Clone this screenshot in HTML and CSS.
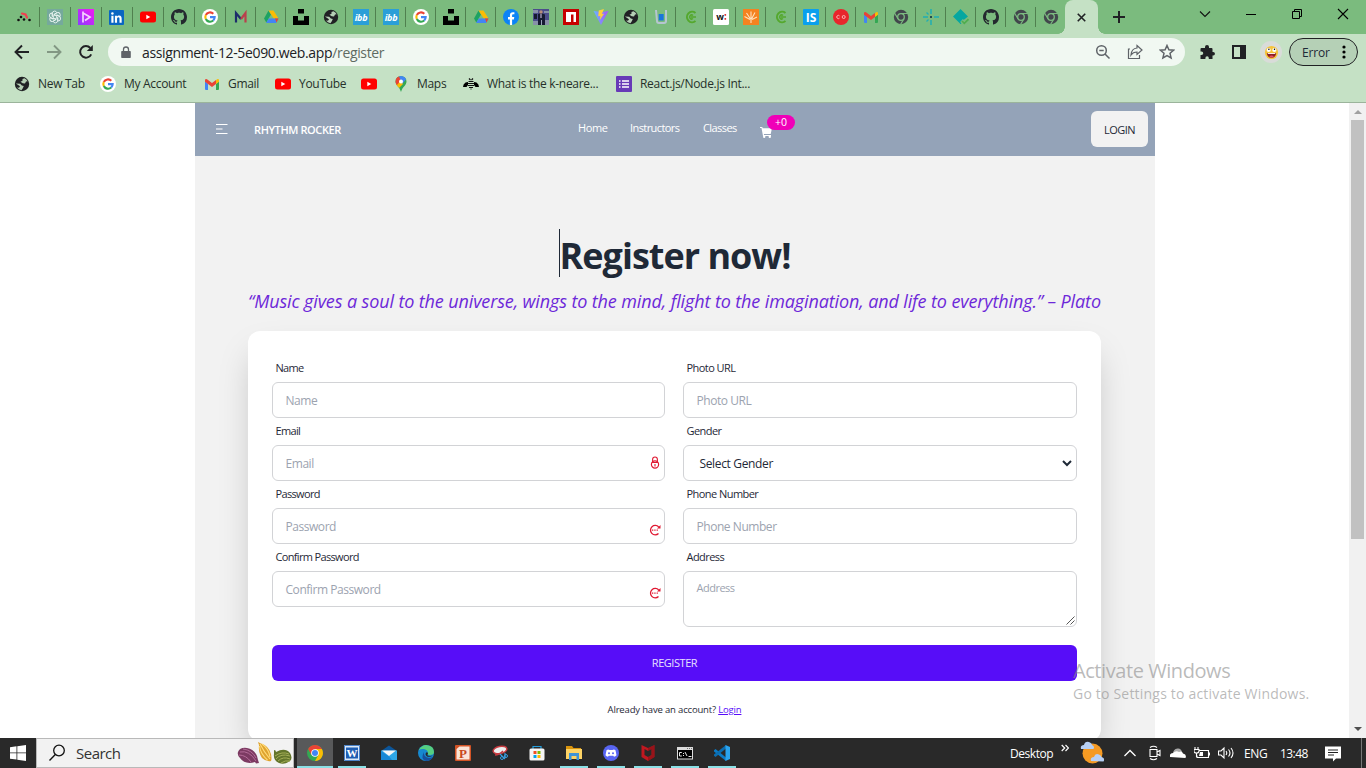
FILE: index.html
```html
<!DOCTYPE html>
<html lang="en">
<head>
<meta charset="utf-8">
<title>Rhythm Rocker | Register</title>
<link rel="stylesheet" href="styles.css">
</head>
<body>
<svg class="sprite" aria-hidden="true">
  <defs>
    <symbol id="dots" viewBox="0 0 16 16"><g fill="#111"><circle cx="2.500" cy="11" r="1.300"/><circle cx="5" cy="8" r="1.300"/><circle cx="8" cy="10.500" r="1.300"/><circle cx="13.500" cy="11" r="1.300"/></g><path d="M6 4.500l3.500 1 1.500 3" fill="none" stroke="#f04050" stroke-width="2.200" stroke-linecap="round"/></symbol>
    <symbol id="gpt" viewBox="0 0 16 16"><path fill="#75a99c" d="M0 0h16v16H0z"/><g fill="none" stroke="#e8f3f0" stroke-width=".9"><path id="petal" d="M8 6L5.300 7.500V4.300q.2-2 2.200-2.200 1.800 0 2.500 1.500L7.300 5.200"/><use href="#petal" transform="rotate(60 8 8)"/><use href="#petal" transform="rotate(120 8 8)"/><use href="#petal" transform="rotate(180 8 8)"/><use href="#petal" transform="rotate(240 8 8)"/><use href="#petal" transform="rotate(300 8 8)"/></g></symbol>
    <symbol id="purple" viewBox="0 0 16 16"><path fill="url(#pg)" d="M0 0h16v16H0z"/><path d="M5 2.500v11M5 4l7 4-5 3.500" fill="none" stroke="#f5d5ff" stroke-width="1.700"/></symbol>
    <linearGradient id="pg" x1="1" x2="0" y2="1"><stop stop-color="#f41bf1"/><stop offset="1" stop-color="#8a3cff"/></linearGradient>
    <symbol id="linkedin" viewBox="0 0 16 16"><rect width="16" height="16" rx="1" fill="#0a66c2"/><path fill="#fff" d="M2.500 6h2.300v7.500H2.500zM6.300 6h2.200v1c.4-.7 1.200-1.200 2.300-1.200 2.200 0 2.700 1.400 2.700 3.400v4.300h-2.300V9.700c0-1-.1-1.900-1.200-1.900s-1.400.9-1.400 1.900v3.800H6.300z"/><circle cx="3.650" cy="3.650" r="1.350" fill="#fff"/></symbol>
    <symbol id="youtube" viewBox="0 0 16 16"><rect y="2.500" width="16" height="11" rx="2.500" fill="#f00"/><path fill="#fff" d="M6.300 5.700v4.600l4-2.300z"/></symbol>
    <symbol id="github" viewBox="0 0 16 16"><path fill="#24292f" d="M8 0C3.580 0 0 3.580 0 8c0 3.540 2.290 6.530 5.470 7.590.4.070.55-.17.55-.38 0-.19-.01-.82-.01-1.490-2.010.37-2.530-.49-2.690-.94-.09-.23-.48-.94-.82-1.130-.28-.15-.68-.52-.01-.53.63-.01 1.080.58 1.230.82.72 1.210 1.870.87 2.330.66.07-.52.28-.87.51-1.070-1.780-.2-3.640-.89-3.640-3.950 0-.87.31-1.590.82-2.150-.08-.2-.36-1.020.08-2.120 0 0 .67-.21 2.200.82.64-.18 1.320-.27 2-.27s1.360.09 2 .27c1.530-1.040 2.200-.82 2.200-.82.44 1.100.16 1.920.08 2.120.51.56.82 1.270.82 2.150 0 3.070-1.870 3.750-3.650 3.950.29.25.54.73.54 1.480 0 1.070-.01 1.930-.01 2.200 0 .21.15.46.55.38A8.010 8.010 0 0 0 16 8c0-4.420-3.580-8-8-8z"/></symbol>
    <symbol id="google" viewBox="0 0 16 16"><circle cx="8" cy="8" r="8" fill="#fff"/><g fill="none" stroke-width="2.100"><path stroke="#ea4335" d="M11.300 4.700A4.700 4.700 0 0 0 3.800 6"/><path stroke="#fbbc05" d="M3.800 6a4.700 4.700 0 0 0 0 4"/><path stroke="#34a853" d="M3.800 10a4.700 4.700 0 0 0 7.400 1.500"/><path stroke="#4285f4" d="M11.200 11.500A4.700 4.700 0 0 0 12.700 8.100H8"/></g></symbol>
    <symbol id="mletter" viewBox="0 0 16 16"><path d="M3 13.500V4l5 6" fill="none" stroke="#1d2d6b" stroke-width="2.200"/><path d="M8 10l4.500-6v9.500" fill="none" stroke="#b9404c" stroke-width="2.200"/></symbol>
    <symbol id="drive" viewBox="0 0 16 16"><path fill="#1ea362" d="M5.500 1.500L1 9.500l2.300 4L8 5.500z"/><path fill="#fbbc04" d="M5.500 1.500h5l5 8h-4.700z"/><path fill="#4285f4" d="M5.700 9.500h9.800l-2.300 4.500H3.100z"/><path fill="#ea4335" d="M12 9.500h3.500l-2 4z"/></symbol>
    <symbol id="unsplash" viewBox="0 0 16 16"><path d="M5 0h6v4.500H5zM0 7h5v4.500h6V7h5v9H0z"/></symbol>
    <symbol id="globe" viewBox="0 0 16 16"><circle cx="8" cy="8" r="7.200" fill="#202124"/><path fill="#b5cfb5" d="M8.500 3l2-.8q2 1 3.200 3l-1.700.3-1 2-2.300-.3-2.200-1.500 2-1zM1.900 7.500l4.300.3 1.600 1.700 2 .5-1 2.200-1.300 2q-3-.3-4.500-2.700l2 .3 1-1.500z"/></symbol>
    <symbol id="ibb" viewBox="0 0 16 16"><path fill="#2a9fd8" d="M0 0h16v16H0z"/><text x="8" y="12" class="ico-text ibb-text">ibb</text></symbol>
    <symbol id="facebook" viewBox="0 0 16 16"><circle cx="8" cy="8" r="8" fill="#0c83f5"/><path fill="#fff" d="M6.900 16v-5.600H5V8h1.900V6.400c0-2.100 1.100-3.200 3-3.200l1.500.1v2h-1c-1 0-1.300.5-1.300 1.200V8h2.200l-.4 2.400H9.100V16z"/></symbol>
    <symbol id="photo" viewBox="0 0 16 16"><path fill="#4b4d8b" d="M0 0h16v16H0z"/><path fill="#8790a8" d="M0 1h5v3H0zM11 2h5v2h-5zM0 12h5v4H0zM12 11h4v5h-4z"/><path fill="#161a32" d="M5 5l3-1 4 1.500V16H5zM1 5h3v5H1z"/><path fill="#99a4ba" d="M8 11h1v5H8z"/><circle cx="8" cy="3" r="1.700" fill="#b98c7c"/><path stroke="#dce" d="M8 5v4"/></symbol>
    <symbol id="npm" viewBox="0 0 16 16"><path fill="#c70000" d="M0 0h16v16H0z"/><path fill="#fff" d="M3 3h10v10h-2.500V5.500H8V13H3z"/></symbol>
    <symbol id="vite" viewBox="0 0 16 16"><path fill="url(#vg)" d="M.5 2L8 16l7.500-14L9 3z"/><path fill="#ffcf3a" d="M11 0L5.800 1.400 5.200 7.300l2.200-.4-.6 4 4.300-6.200-2.200.3z"/></symbol>
    <linearGradient id="vg" x2="1"><stop stop-color="#67b7ff"/><stop offset="1" stop-color="#a855f7"/></linearGradient>
    <symbol id="bluecup" viewBox="0 0 16 16"><path fill="none" stroke="#b6c5d0" stroke-width="2" d="M3 1l1 11q0 2 2 2h5q2 0 2-2V1"/><path fill="#1976dc" d="M5.700 5h5v6.500h-5z"/></symbol>
    <symbol id="cgreen" viewBox="0 0 16 16"><path fill="none" stroke="#54a82d" stroke-width="2" d="M12.500 4A5.200 5.200 0 1 0 12.500 12"/><path fill="none" stroke="#54a82d" stroke-width="1.500" d="M10 6.500a2 2 0 1 0 0 3M8 8h5"/></symbol>
    <symbol id="wcolon" viewBox="0 0 16 16"><rect width="16" height="16" rx="1.500" fill="#fff"/><text x="7" y="11" class="ico-text w-text">w</text><path fill="#d33" d="M11.500 5h1.600v1.800h-1.600zM11.500 9h1.600v1.800h-1.600z"/></symbol>
    <symbol id="orange" viewBox="0 0 16 16"><path fill="#f58220" d="M0 0h16v16H0z"/><path d="M8 10V2.500M7.500 10L3.500 4M8.500 10L12 3.500M7 10.500L1.500 7.500M9 10.500l5-2.500M8 9v5" stroke="#ffe1bd" stroke-width="1.100" fill="none"/></symbol>
    <symbol id="is" viewBox="0 0 16 16"><rect width="16" height="16" rx="1" fill="#0aa0ee"/><text x="8" y="12.500" class="ico-text is-text">IS</text></symbol>
    <symbol id="co" viewBox="0 0 16 16"><circle cx="8" cy="8" r="8" fill="#e8262c"/><g fill="none" stroke="#ffc1c1" stroke-width=".9"><path d="M6.500 6.900a1.600 1.600 0 1 0 0 2.200"/><circle cx="10.700" cy="8" r="1.500"/></g></symbol>
    <symbol id="gmail" viewBox="0 0 16 16"><path fill="#4285f4" d="M1 5.500l3 2.200V14H2q-1 0-1-1z"/><path fill="#34a853" d="M12 7.700l3-2.200V13q0 1-1 1h-2z"/><path fill="#fbbc04" d="M12 4.300l1-1q2-.8 2 1.200v1.200l-3 2.200z"/><path fill="#ea4335" d="M1 4.500q0-2 2-1.200l5 3.800 4-3v3.800L8 11 1 5.700z"/></symbol>
    <symbol id="chromegray" viewBox="0 0 16 16"><circle cx="8" cy="8" r="7.200" fill="#42474c"/><circle cx="8" cy="8" r="3.300" fill="none" stroke="#7cbb80" stroke-width="1.300"/><path d="M8 4.500h7M5 9.800L1.500 4M11 9.800L7.500 15.500" stroke="#7cbb80" stroke-width="1.200"/></symbol>
    <symbol id="netlify" viewBox="0 0 16 16"><path d="M8 0v5M8 11v5M0 8h5M11 8h5" stroke="#20aeb4" stroke-width="1.500"/><path d="M3.500 3.500l2 2M3.500 12.500l2-2" stroke="#20aeb4" stroke-width="1.300"/><path fill="#234b50" d="M7 7h2v2H7z"/></symbol>
    <symbol id="diamond" viewBox="0 0 16 16"><path fill="#05a7a0" d="M7.500 0L15 7.500l-5 4-2 3.500H7.500L0 7.500z"/><path fill="none" stroke="#7bbb7e" stroke-width="4" d="M8.500 11.500l2.800 2.800 4.700-4.600"/><path fill="none" stroke="#4fae4e" stroke-width="1.700" d="M9 12l2.300 2.300 4.200-4.100"/></symbol>
    <symbol id="maps" viewBox="0 0 16 16"><clipPath id="pin"><path d="M8 0a5.500 5.500 0 0 0-5.500 5.500C2.500 9.500 6.500 10.500 8 16c1.500-5.500 5.500-6.500 5.500-10.500A5.500 5.500 0 0 0 8 0z"/></clipPath><g clip-path="url(#pin)"><path fill="#34a853" d="M0 0h16v16H0z"/><path fill="#fbbc04" d="M0 11L10 1v7l-5 5z"/><path fill="#ea4335" d="M0 0h6l2 4-4 5-4-2z"/><path fill="#4285f4" d="M6 0h10L9 8z"/></g><circle cx="8" cy="5.500" r="2" fill="#fff"/></symbol>
    <symbol id="bee" viewBox="0 0 16 16"><path d="M6 2.500l1.500 1.500M10 2.500L8.500 4M5.500 5.500h5M5 7.500h6M5 9.500h6M6 11.500h4M7.500 13h1" stroke="#111" stroke-width="1.200"/><path d="M5 6L2.500 6.500Q0 8 0 11h3.500L5 9zM11 6l2.500.5Q16 8 16 11h-3.500L11 9z"/></symbol>
    <symbol id="forms" viewBox="0 0 16 16"><rect width="16" height="16" rx="1" fill="#673ab7"/><path d="M3 5h1.500M6 5h7M3 8h1.500M6 8h7M3 11h1.500M6 11h7" stroke="#fff" stroke-width="1.500"/></symbol>
    <symbol id="pwgen" viewBox="0 0 12 12"><path d="M9.700 3A4.700 4.700 0 1 0 9.500 9.500" fill="none" stroke="#e01932" stroke-width="1.300"/><path fill="#e01932" d="M11.500 1v3.500H8zM3 5.500h1.300v1.300H3zM5.300 5.500h1.300v1.300H5.300zM7.600 5.500h1.300v1.300H7.600z"/></symbol>
  </defs>
</svg>

<header class="browser">
  <div class="tabs">
    <span class="tab wide"><svg><use href="#dots"/></svg></span><span class="tab wide"><svg><use href="#gpt"/></svg></span><span class="tab wide"><svg><use href="#purple"/></svg></span><span class="tab wide"><svg class="in"><use href="#linkedin"/></svg></span><span class="tab wide"><svg><use href="#youtube"/></svg></span><span class="tab wide"><svg><use href="#github"/></svg></span><span class="tab wide"><svg><use href="#google"/></svg></span>
    <span class="tab"><svg><use href="#mletter"/></svg></span><span class="tab"><svg><use href="#drive"/></svg></span><span class="tab"><svg><use href="#unsplash"/></svg></span><span class="tab"><svg><use href="#globe"/></svg></span><span class="tab"><svg><use href="#ibb"/></svg></span><span class="tab"><svg><use href="#ibb"/></svg></span><span class="tab"><svg><use href="#google"/></svg></span><span class="tab"><svg><use href="#unsplash"/></svg></span><span class="tab"><svg><use href="#drive"/></svg></span><span class="tab"><svg><use href="#facebook"/></svg></span><span class="tab"><svg><use href="#photo"/></svg></span><span class="tab"><svg><use href="#npm"/></svg></span><span class="tab"><svg><use href="#vite"/></svg></span><span class="tab"><svg><use href="#globe"/></svg></span><span class="tab"><svg><use href="#bluecup"/></svg></span><span class="tab"><svg><use href="#cgreen"/></svg></span><span class="tab"><svg><use href="#wcolon"/></svg></span><span class="tab"><svg><use href="#orange"/></svg></span><span class="tab"><svg><use href="#cgreen"/></svg></span><span class="tab"><svg><use href="#is"/></svg></span><span class="tab"><svg><use href="#co"/></svg></span><span class="tab"><svg><use href="#gmail"/></svg></span><span class="tab"><svg><use href="#chromegray"/></svg></span><span class="tab"><svg><use href="#netlify"/></svg></span><span class="tab"><svg><use href="#diamond"/></svg></span><span class="tab"><svg><use href="#github"/></svg></span><span class="tab"><svg><use href="#chromegray"/></svg></span><span class="tab last"><svg><use href="#chromegray"/></svg></span>
    <span class="tab-active"><svg viewBox="0 0 16 16"><path d="M4 4l8 8M12 4l-8 8" stroke="#202124" stroke-width="1.700"/></svg></span>
    <svg class="plus" viewBox="0 0 16 16"><path d="M8 2v12M2 8h12" stroke="#202124" stroke-width="2"/></svg>
    <div class="win-controls">
      <svg viewBox="0 0 12 12"><path d="M1 3.500l5 5 5-5" fill="none" stroke="#111" stroke-width="1.100"/></svg>
      <svg viewBox="0 0 12 12"><path d="M1 6.500h10" stroke="#000"/></svg>
      <svg viewBox="0 0 12 12"><path d="M1.500 3.500h7v7h-7zM3.500 3.500v-2h7v7h-2" fill="none" stroke="#000"/></svg>
      <svg viewBox="0 0 12 12"><path d="M1 1l10 10M11 1L1 11" stroke="#000" stroke-width="1.100"/></svg>
    </div>
  </div>
  <div class="toolbar">
    <svg class="nav-ico" viewBox="0 0 16 16"><path d="M15 8H2M8 1.500L1.500 8 8 14.500" fill="none" stroke="#202124" stroke-width="1.900"/></svg>
    <svg class="nav-ico" viewBox="0 0 16 16"><path d="M1 8h13M8 1.500L14.500 8 8 14.500" fill="none" stroke="#829783" stroke-width="1.900"/></svg>
    <svg class="nav-ico" viewBox="0 0 16 16"><path d="M13.200 10.300A5.800 5.800 0 1 1 12.300 4" fill="none" stroke="#202124" stroke-width="2"/><path fill="#202124" d="M14.800 1v6H8.800z"/></svg>
    <div class="omnibox">
      <svg class="lock" viewBox="0 0 10 13"><path d="M1 5h8q.8 0 .8.800v5.400q0 .8-.8.800H1q-.8 0-.8-.8V5.800Q.2 5 1 5z" fill="#5f6368"/><path d="M2.500 5V3.500a2.500 2.500 0 0 1 5 0V5" fill="none" stroke="#5f6368" stroke-width="1.300"/></svg>
      <span class="url">assignment-12-5e090.web.app<span class="path">/register</span></span>
      <div class="omni-actions">
        <svg viewBox="0 0 16 16"><circle cx="6.500" cy="6.500" r="4.800" fill="none" stroke="#5f6368" stroke-width="1.500"/><path d="M10 10l4.500 4.500M4.300 6.500h4.400" stroke="#5f6368" stroke-width="1.500"/></svg>
        <svg viewBox="0 0 16 16"><path d="M3 5H1.500v9.500h11V11" fill="none" stroke="#5f6368" stroke-width="1.200"/><path d="M10 1.500l5 4.500-5 4.500V8q-4 0-6 3 .5-6.500 6-7z" fill="none" stroke="#5f6368" stroke-width="1.200"/></svg>
        <svg viewBox="0 0 16 16"><path d="M8 1.500l1.900 4.300 4.700.4-3.600 3.100 1.100 4.600L8 11.500l-4.100 2.400L5 9.300 1.400 6.200l4.700-.4z" fill="none" stroke="#5f6368" stroke-width="1.500"/></svg>
      </div>
    </div>
    <svg class="puzzle" viewBox="0 0 16 16"><path fill="#202124" d="M2 4h3.500V3a2 2 0 0 1 4 0v1H12q1 0 1 1v3h.700a1.700 1.700 0 0 1 0 3.500H13V15H9.300v-1a1.700 1.700 0 0 0-3.400 0v1H1v-4h1a1.700 1.700 0 0 0 0-3.500H1V5q0-1 1-1z"/></svg>
    <svg class="panel" viewBox="0 0 16 16"><path fill="#202124" fill-rule="evenodd" d="M1 1h14v14H1zM3 3v10h6V3z"/></svg>
    <span class="avatar"><svg viewBox="0 0 16 16"><circle cx="8" cy="8" r="7" fill="#f6c43b"/><circle cx="5" cy="5.300" r="2.200" fill="#fff"/><circle cx="11" cy="5.300" r="2.200" fill="#fff"/><circle cx="5.200" cy="4.600" r=".8"/><circle cx="11.200" cy="4.600" r=".8"/><path fill="#8d2024" d="M3 8.500h10q-.5 5-5 5t-5-5z"/><path fill="#fff" d="M4 8.500h8v1H4z"/><path fill="#ee5060" d="M5.500 12q2.500-1.500 5 0-2.500 2.500-5 0z"/></svg></span>
    <span class="error"><span>Error</span><svg viewBox="0 0 4 16"><circle cx="2" cy="3" r="1.600"/><circle cx="2" cy="8" r="1.600"/><circle cx="2" cy="13" r="1.600"/></svg></span>
  </div>
  <div class="bookmarks">
    <span class="bm"><svg><use href="#globe"/></svg><span>New Tab</span></span>
    <span class="bm"><svg><use href="#google"/></svg><span>My Account</span></span>
    <span class="bm"><svg><use href="#gmail"/></svg><span>Gmail</span></span>
    <span class="bm"><svg><use href="#youtube"/></svg><span>YouTube</span></span>
    <span class="bm"><svg><use href="#youtube"/></svg></span>
    <span class="bm"><svg><use href="#maps"/></svg><span>Maps</span></span>
    <span class="bm"><svg><use href="#bee"/></svg><span>What is the k-neare...</span></span>
    <span class="bm"><svg><use href="#forms"/></svg><span>React.js/Node.js Int...</span></span>
  </div>
</header>

<div class="viewport">
  <main class="site">
    <nav class="navbar">
      <svg class="burger" viewBox="0 0 12 12"><path d="M0 1.500h11.500M0 6h6.500M0 10.500h11.500" stroke="#fff" stroke-width="1.100"/></svg>
      <span class="brand">RHYTHM ROCKER</span>
      <div class="links">
        <a class="home">Home</a><a class="instr">Instructors</a><a class="classes">Classes</a>
        <span class="cart"><svg viewBox="0 0 12 12"><path fill="#fff" d="M0 1h2.300l.4 1.300H12L10.700 8H3.900L4 9h7v1H3L1.500 2H0z"/><circle cx="4.200" cy="10.700" r="1.200" fill="#fff"/><circle cx="9.800" cy="10.700" r="1.200" fill="#fff"/></svg><span class="badge">+0</span></span>
      </div>
      <a class="login-btn">LOGIN</a>
    </nav>
    <section class="hero">
      <h1><span class="caret"></span>Register now!</h1>
      <p class="quote">“Music gives a soul to the universe, wings to the mind, flight to the imagination, and life to everything.” – Plato</p>
      <form class="card">
        <div class="cols">
          <div class="col">
            <label>Name</label><div class="input">Name</div>
            <label>Email</label><div class="input">Email<svg class="key" viewBox="0 0 10 14"><circle cx="5" cy="8.500" r="3.600" fill="none" stroke="#e01932" stroke-width="1.200"/><path d="M2.600 6V3.600a2.400 2.600 0 0 1 4.800 0V6M2 6.500h6M5 8v2.500" fill="none" stroke="#e01932" stroke-width="1.100"/></svg></div>
            <label>Password</label><div class="input">Password<svg class="gen"><use href="#pwgen"/></svg></div>
            <label>Confirm Password</label><div class="input">Confirm Password<svg class="gen"><use href="#pwgen"/></svg></div>
          </div>
          <div class="col">
            <label>Photo URL</label><div class="input">Photo URL</div>
            <label>Gender</label><div class="input select">Select Gender<svg class="arrow" viewBox="0 0 10 8"><path d="M1 2l4 4 4-4" fill="none" stroke="#1f2937" stroke-width="2"/></svg></div>
            <label>Phone Number</label><div class="input">Phone Number</div>
            <label>Address</label><div class="input area">Address<svg class="grip" viewBox="0 0 9 9"><path d="M.5 8.500l8-8M4.500 8.500l4-4" stroke="#444" stroke-width=".9"/></svg></div>
          </div>
        </div>
        <div class="submit">REGISTER</div>
        <p class="have">Already have an account? <a>Login</a></p>
      </form>
    </section>
  </main>
  <div class="scrollbar"><i class="up"></i><i class="thumb"></i><i class="down"></i></div>
</div>

<footer class="taskbar">
  <span class="start"><svg viewBox="0 0 16 16"><path fill="#fff" d="M0 2.200L6.500 1.300v6.200H0zM7.300 1.200L16 0v7.500H7.300zM0 8.300h6.500v6.300L0 13.700zM7.300 8.300H16V16l-8.700-1.200z"/></svg></span>
  <div class="search">
    <svg class="glass" viewBox="0 0 18 18"><circle cx="11" cy="6.500" r="5.300" fill="none" stroke="#111" stroke-width="1.300"/><path d="M7.300 10.500L1.500 16.500" stroke="#111" stroke-width="1.400"/></svg>
    <span>Search</span>
    <svg class="cocoa" viewBox="0 0 56 24"><path fill="#7c3a62" d="M1 11q2-5 9-4 7 1 10 8l1 4 1 3-3 .5-1-1.500Q8 24 3 17 0 14 1 11z"/><path d="M3 11q9-2 16 9M6 8q9 1 13 9M2 14q7 0 12 7" stroke="#b46b98" fill="none"/><path fill="#dfa32f" d="M21 1l3 1.500Q32 5 34 13q1 5 0 7-5 1-9-3-4-6-3-13z"/><path d="M23 3q4 8 10 15M25 3q7 5 8 13M22.500 5q1 8 8 14" stroke="#ffdc79" fill="none" stroke-width="1.100"/><path fill="#63752b" d="M37 9q2 0 2 2 9-5 14 1 3 5 0 8-5 4-11 2-6-3-5-9z"/><path d="M38 15q7-5 14-2M39 18q5-6 14-3M41 20q5-5 12-2M44 22q4-3 9-2" stroke="#a4ae57" fill="none"/></svg>
  </div>
  <div class="apps">
    <span class="app current"><svg viewBox="0 0 16 16"><circle cx="8" cy="8" r="8" fill="#34a853"/><path fill="#fbbc04" d="M8 8V4h6.900A8 8 0 0 1 8 16l3.400-6z"/><path fill="#ea4335" d="M1.100 4A8 8 0 0 1 14.900 4H8l-3.500 6z"/><circle cx="8" cy="8" r="3.800" fill="#fff"/><circle cx="8" cy="8" r="3" fill="#4285f4"/></svg></span>
    <span class="app open"><svg viewBox="0 0 16 16"><rect width="16" height="16" rx="1" fill="#dce9f8"/><path fill="none" stroke="#4b83c9" d="M.5.5h15v15H.5z"/><path fill="#1f5eb3" d="M2 2.500h12v11H2z"/><text x="8" y="12.200" class="ico-text off-text">W</text></svg></span>
    <span class="app"><svg viewBox="0 0 16 16"><path fill="#0c5599" d="M0 6l8-5.500L16 6z"/><path fill="#2ea8e8" d="M0 5.500h16V15H0z"/><path fill="#f3f6f8" d="M1 5.500h14L8 11z"/><path fill="#1688d6" d="M0 15V6l8 5.500L11 15z"/></svg></span>
    <span class="app"><svg viewBox="0 0 16 16"><circle cx="8" cy="8" r="8" fill="#1689d0"/><path fill="#55cf82" d="M1 4.500Q4 0 8 0q8 .5 8 7 0 3-4 3-3 0-2-2 0-3-4-4-3-.5-5 1z"/><path fill="#164f9d" d="M6 7q-1 5 5 6 2 0 4-1-2 4-7 4Q2 14 6 7z"/><path fill="#282828" d="M9 7q2 2 0 3 2 1.500 6 .5-3 2-6 1Q6 9 9 7z"/></svg></span>
    <span class="app"><svg viewBox="0 0 16 16"><rect width="16" height="16" rx="1" fill="#d35426"/><path fill="#fbe4d8" d="M1.500 4l3-2.500h10v13h-13z"/><text x="8" y="12.500" class="ico-text pp-text">P</text></svg></span>
    <span class="app"><svg viewBox="0 0 16 16"><ellipse cx="8" cy="5" rx="7" ry="3.600" transform="rotate(-12 8 5)" fill="#eee" stroke="#c63a3f" stroke-width="1.500"/><path d="M3 10q4 0 8-4" stroke="#c63a3f" stroke-width="1.500" fill="none"/><path d="M8 9l5 5M13 8v5" stroke="#3b9fe0" stroke-width="1.200"/><circle cx="10" cy="13" r="1.500" fill="none" stroke="#3b9fe0"/><circle cx="14" cy="11" r="1.500" fill="none" stroke="#3b9fe0"/></svg></span>
    <span class="app"><svg viewBox="0 0 16 16"><path d="M4 4V1.500h8V4" fill="none" stroke="#249edc" stroke-width="1.200"/><rect x=".5" y="3.500" width="15" height="12" rx="1.500" fill="#f5f5f5"/><path fill="#f04e23" d="M4.500 6h3v3h-3z"/><path fill="#7fba00" d="M8.500 6h3v3h-3z"/><path fill="#00a4ef" d="M4.500 10h3v3h-3z"/><path fill="#ffb900" d="M8.500 10h3v3h-3z"/></svg></span>
    <span class="app open"><svg viewBox="0 0 16 16"><path fill="#d9940d" d="M0 1h6l1.500 2H15v3H0z"/><path fill="#fdd365" d="M0 4h16v10H0z"/><path fill="#3f93d6" d="M3 8h10v7h-2.500v-4h-5v4H3z"/></svg></span>
    <span class="app open"><svg viewBox="0 0 16 16"><circle cx="8" cy="8" r="8" fill="#5865f2"/><path fill="#fff" d="M5 4.500l1.500.5h3l1.500-.5 1.500.8 1 5q-1 1.200-2.500 1.400l-.7-1H5.700l-.7 1q-1.500-.2-2.500-1.400l1-5z"/><circle cx="6" cy="8.300" r="1" fill="#5865f2"/><circle cx="10" cy="8.300" r="1" fill="#5865f2"/></svg></span>
    <span class="app open"><svg viewBox="0 0 16 16"><path fill="#c01820" d="M1.500 0L8 3l6.500-3v12L8 16l-6.500-4zM4.500 4v6L8 12l3.500-2V4L8 6z" fill-rule="evenodd"/><path fill="#7f1116" d="M8 3v3l3.500-2v6L8 12v4l6.500-4V0z" opacity=".6"/></svg></span>
    <span class="app open"><svg viewBox="0 0 16 16"><path fill="#ddd" d="M0 2h16v12.500H0z"/><path d="M1 5h14v8.500H1z"/><path fill="#777" d="M10 3h1v1h-1zM12 3h1v1h-1zM14 3h1v1h-1z"/><path d="M4.800 7.500H2.500v3.500h2.300M6.500 8v1M6.500 10v1M8 7l2 4M11.500 11.500h3" stroke="#fff" stroke-width=".9" fill="none"/></svg></span>
    <span class="app open"><svg viewBox="0 0 16 16"><path fill="#0a7bc7" d="M0 5.200l1.500-1.300L12 12.500V16L0 6.500z"/><path fill="#0b6db0" d="M0 10.800l1.500 1.300L12 3.500V0L0 9.500z"/><path fill="#2aa4ee" d="M11.500 0L16 2v12l-4.500 2z"/></svg></span>
  </div>
  <div class="tray">
    <span class="desktop">Desktop</span><svg class="more" viewBox="0 0 8 8"><path d="M.7 1l3 3-3 3M4.500 1l3 3-3 3" fill="none" stroke="#fff" stroke-width="1.200"/></svg>
    <svg class="weather" viewBox="0 0 24 24"><circle cx="12.500" cy="12.500" r="10" fill="#f59a23"/><path fill="#b7d0f5" d="M1 8q-1-4 3-4 1-4 5-3 3 1 3 3 3 1 1.500 4zM11 20q-1-4 3-4 1-4 5-2.500 2 .5 2.500 2.500 4 1 2 4.500z"/></svg>
    <svg class="t-up" viewBox="0 0 16 16"><path d="M2.500 11L8 5.500l5.500 5.500" fill="none" stroke="#fff" stroke-width="1.300"/></svg>
    <svg class="t-cam" viewBox="0 0 16 16"><path d="M4 4.500h7v7H4zM11 7l3-1.500v5L11 9M4 2.500Q7.500 0 11 2.500M4 13.500q3.500 2.500 7 0" fill="none" stroke="#fff" stroke-width="1.100"/></svg>
    <svg class="t-cloud" viewBox="0 0 16 16"><path fill="#aaa" d="M3 9q0-5 4.500-5.500Q11 3 12 7z"/><path fill="#fff" d="M0 12q-1-3.500 3-4 3-3 6-1 3-1.500 4 1.500 4 1 2.500 4.500Z"/></svg>
    <svg class="t-bat" viewBox="0 0 16 16"><path d="M5.500 5.500h9v7H3v-2M15.500 7.500v3M1 2v2.500M4 2v2.500M0 4.500h5V6Q5 8 2.500 8T0 6zM2.500 8v4" fill="none" stroke="#fff" stroke-width="1.100"/><path fill="#fff" d="M6 7h3v4H5z"/></svg>
    <svg class="t-vol" viewBox="0 0 16 16"><path d="M.5 6H3l3-3v10l-3-3H.5zM8 6q1.500 2 0 4M10.500 4.500q3 3.500 0 7M13 3q4 5 0 10" fill="none" stroke="#fff" stroke-width="1.100"/></svg>
    <span class="lang">ENG</span><span class="clock">13:48</span>
    <svg class="notif" viewBox="0 0 16 16"><path fill="#fff" d="M0 1h16v12h-5l-3 3v-3H0z"/><path d="M3 4.500h10M3 7h10M3 9.500h6" stroke="#222" stroke-width="1.100"/></svg>
  </div>
</footer>

<div class="watermark"><div class="wm1">Activate Windows</div><div class="wm2">Go to Settings to activate Windows.</div></div>
</body>
</html>
```
FILE: styles.css
```css
* { box-sizing: border-box; }
body { margin: 0; width: 1366px; height: 768px; overflow: hidden; background: #fff; font-family: "Open Sans", "Noto Sans", sans-serif; color: #1f2937; display: flex; flex-direction: column; position: relative; }
svg { display: block; flex: none; }
.sprite { position: absolute; width: 0; height: 0; }
.ico-text { text-anchor: middle; font-family: "Open Sans", sans-serif; font-weight: 700; fill: #fff; }
.ibb-text { font-size: 9px; font-style: italic; letter-spacing: -.3px; }
.w-text { font-size: 9px; fill: #111; }
.is-text { font-size: 12px; }
.off-text { font-size: 11px; font-family: "Liberation Serif", serif; }
.pp-text { font-size: 13px; font-family: "Liberation Serif", serif; fill: #c8481c; }

/* browser chrome */
.browser { height: 103px; background: #c5e1c5; border-bottom: 1px solid #9bb49b; flex: none; }
.tabs { height: 34px; background: #7bbb7e; display: flex; padding-left: 9px; }
.tab { width: 30px; height: 34px; display: flex; align-items: center; padding-left: 7px; position: relative; flex: none; }
.tab::after { content: ""; margin-left: auto; width: 1px; height: 20px; background: #50804f; }
.tab.last::after { display: none; }
.tab.wide { width: 31px; }
.tab svg { width: 16px; height: 16px; }
.tab svg.in { width: 15px; height: 15px; }
.tab-active { width: 33px; height: 34px; margin-left: -1px; background: #c5e1c5; border-radius: 8px 8px 0 0; display: flex; align-items: center; justify-content: center; position: relative; flex: none; }
.tab-active::before, .tab-active::after { content: ""; position: absolute; bottom: 0; width: 7px; height: 7px; }
.tab-active::before { left: -7px; background: radial-gradient(circle at 0 0, transparent 6.500px, #c5e1c5 7px); }
.tab-active::after { right: -7px; background: radial-gradient(circle at 100% 0, transparent 6.500px, #c5e1c5 7px); }
.tab-active svg { width: 15px; height: 15px; }
.plus { width: 16px; height: 16px; margin: 9px 0 0 13px; }
.win-controls { display: flex; gap: 34px; margin: 8px 0 0 72px; }
.win-controls svg { width: 12px; height: 12px; }
.toolbar { height: 36px; display: flex; align-items: center; padding-left: 14px; }
.nav-ico { width: 16px; height: 16px; margin-right: 16px; }
.nav-ico + .nav-ico + .nav-ico { margin-right: 14px; }
.omnibox { width: 1077px; height: 28px; border-radius: 14px; background: #f1f8f2; display: flex; align-items: center; padding: 0 10px 0 13px; flex: none; }
.lock { width: 10px; height: 13px; margin-right: 11px; }
.url { font-size: 14px; letter-spacing: -.35px; color: #202124; white-space: nowrap; }
.path { color: #5f6b62; }
.omni-actions { margin-left: auto; display: flex; gap: 16px; }
.omni-actions svg { width: 16px; height: 16px; }
.puzzle { width: 17px; height: 16px; margin-left: 14px; }
.panel { width: 16px; height: 16px; margin-left: 15px; }
.avatar { width: 22px; height: 22px; margin-left: 13px; border-radius: 50%; background: #d9dcd9; display: flex; align-items: center; justify-content: center; }
.avatar svg { width: 15px; height: 15px; }
.error { width: 69px; height: 28px; margin-left: 7px; border: 1px solid #202124; border-radius: 14px; background: #b5d0b6; display: flex; align-items: center; padding-left: 12px; font-size: 12px; letter-spacing: -.2px; }
.error span { width: 40px; }
.error svg { width: 4px; height: 16px; }
.bookmarks { height: 28px; display: flex; align-items: center; padding: 0 0 1px 14px; font-size: 12px; color: #26302a; }
.bm { display: flex; gap: 8px; align-items: center; white-space: nowrap; width: 86px; flex: none; }
.bm svg { width: 16px; height: 16px; }
.bm:nth-child(2) { width: 104px; } .bm:nth-child(3) { width: 71px; } .bm:nth-child(5) { width: 32px; } .bm:nth-child(6) { width: 70px; } .bm:nth-child(7) { width: 153px; } .bm:nth-child(8) { width: 150px; }
.bm span { letter-spacing: -.3px; }

/* page */
.viewport { height: 635px; overflow: hidden; display: flex; padding-left: 195px; flex: none; }
.site { width: 960px; height: 700px; background: #f2f2f2; flex: none; overflow: hidden; }
.navbar { height: 53px; background: #94a3b8; display: flex; align-items: center; padding: 0 7px 1px 21px; color: #fff; font-size: 11px; }
.burger { width: 12px; height: 12px; }
.brand { font-weight: 600; margin-left: 26px; width: 324px; letter-spacing: -.4px; font-size: 11px; }
.links { display: flex; align-items: center; height: 52px; padding-bottom: 3px; letter-spacing: -.58px; }
.home { width: 52px; letter-spacing: -.4px; } .instr { width: 73px; } .classes { width: 57px; }
.cart { position: relative; }
.cart svg { width: 12px; height: 12px; margin-top: 9px; }
.badge { position: absolute; left: 7px; top: -2px; width: 28px; height: 15px; border-radius: 8px; background: #f000b8; font-size: 10.500px; line-height: 15px; text-align: center; letter-spacing: 0; }
.login-btn { margin-left: auto; width: 57px; height: 36px; border-radius: 6px; background: #f2f2f2; color: #1f2937; display: flex; align-items: center; justify-content: center; letter-spacing: -.5px; }
.hero { display: flex; flex-direction: column; align-items: center; padding: 73px 1px 0 0; }
h1 { margin: 0; height: 48px; line-height: 53px; font-size: 36px; font-weight: 700; letter-spacing: -1px; display: flex; white-space: nowrap; }
.caret { width: 1px; height: 48px; background: #1f2937; }
.quote { margin: 11px 0 0; height: 27px; line-height: 27px; font-size: 18px; font-style: italic; letter-spacing: -.12px; color: #6d28d9; white-space: nowrap; }
.card { width: 853px; height: 410px; margin-top: 16px; padding: 24px; border-radius: 12px; background: #fff; box-shadow: 0 18px 36px -9px rgba(0,0,0,.25); }
.cols { display: grid; grid-template-columns: 393px 394px; gap: 18px; }
label { display: block; height: 27px; line-height: 26px; padding-left: 3.500px; font-size: 11px; letter-spacing: -.66px; }
.col + .col label { letter-spacing: -.55px; }
.input { height: 36px; border: 1px solid #d2d3d6; border-radius: 6px; padding: 0 12.500px; font-size: 12px; line-height: 36px; color: #9ca3af; letter-spacing: -.45px; position: relative; }
.select { color: #1f2937; padding-left: 15.500px; letter-spacing: -.35px; }
.area { height: 56px; font-size: 11px; line-height: 32px; letter-spacing: -.5px; }
.key { position: absolute; width: 10px; height: 14px; right: 4px; top: 10px; }
.gen { position: absolute; width: 12px; height: 12px; right: 3px; top: 15px; }
.arrow { position: absolute; width: 10px; height: 8px; right: 4px; top: 13px; }
.grip { position: absolute; width: 9px; height: 9px; right: 1px; bottom: 1px; }
.submit { margin-top: 18px; height: 36px; border-radius: 6px; background: #570df8; color: #e8e0ff; font-size: 11px; text-align: center; line-height: 36px; letter-spacing: -.45px; }
.have { margin: 21px 0 0; font-size: 9.500px; line-height: 16px; text-align: center; letter-spacing: -.17px; }
.have a { color: #570df8; text-decoration: underline; }
.scrollbar { width: 17px; height: 635px; margin-left: auto; background: #f1f1f1; display: flex; flex-direction: column; align-items: center; }
.up { border: 4px solid transparent; border-top: 0; border-bottom-color: #a0a0a0; margin: 7px 0 6px; }
.thumb { width: 13px; height: 419px; background: #c1c1c1; }
.down { border: 4px solid transparent; border-bottom: 0; border-top-color: #505050; margin: auto 0 7px; }

/* taskbar */
.taskbar { height: 30px; background: #292929; display: flex; flex: none; color: #fff; }
.start { width: 36px; padding: 7px 0 0 10px; }
.start svg { width: 16px; height: 16px; }
.search { width: 258px; height: 30px; background: #f2f2f2; border: 1px solid #b9b9b9; display: flex; align-items: center; color: #333; font-size: 15px; letter-spacing: -.5px; padding-left: 11px; }
.glass { width: 18px; height: 18px; margin-right: 10px; }
.cocoa { width: 56px; height: 24px; margin-left: auto; }
.apps { display: flex; margin-left: 3px; gap: 1px; }
.app { width: 36px; height: 30px; display: flex; flex-direction: column; align-items: center; justify-content: space-between; padding-top: 7px; }
.app svg { width: 16px; height: 16px; }
.app.open::after { content: ""; width: 28px; height: 2px; background: #8ae0e6; }
.app.current { background: #58595a; border-bottom: 2px solid #8ae0e6; }
.tray { margin-left: auto; display: flex; align-items: center; font-size: 12px; letter-spacing: -.3px; border-right: 1px solid #777; margin-right: 4px; width: 352px; flex: none; }
.desktop { width: 51px; letter-spacing: -.45px; } .more { width: 8px; height: 8px; margin-bottom: 10px; }
.weather { width: 24px; height: 24px; margin: 0 18px 0 11px; }
.t-up, .t-cam, .t-cloud, .t-bat, .t-vol { width: 16px; height: 16px; margin-right: 8px; }
.t-vol { margin-right: 10px; }
.lang { width: 36px; } .clock { width: 45px; letter-spacing: -.55px; }
.notif { width: 16px; height: 17px; }

/* activation notice floats above the desktop */
.watermark { position: absolute; left: 1073px; top: 658px; color: rgba(140,140,140,.6); white-space: nowrap; }
.wm1 { font-size: 20px; line-height: 26px; letter-spacing: -.43px; }
.wm2 { font-size: 14px; line-height: 20px; letter-spacing: .2px; }
```
